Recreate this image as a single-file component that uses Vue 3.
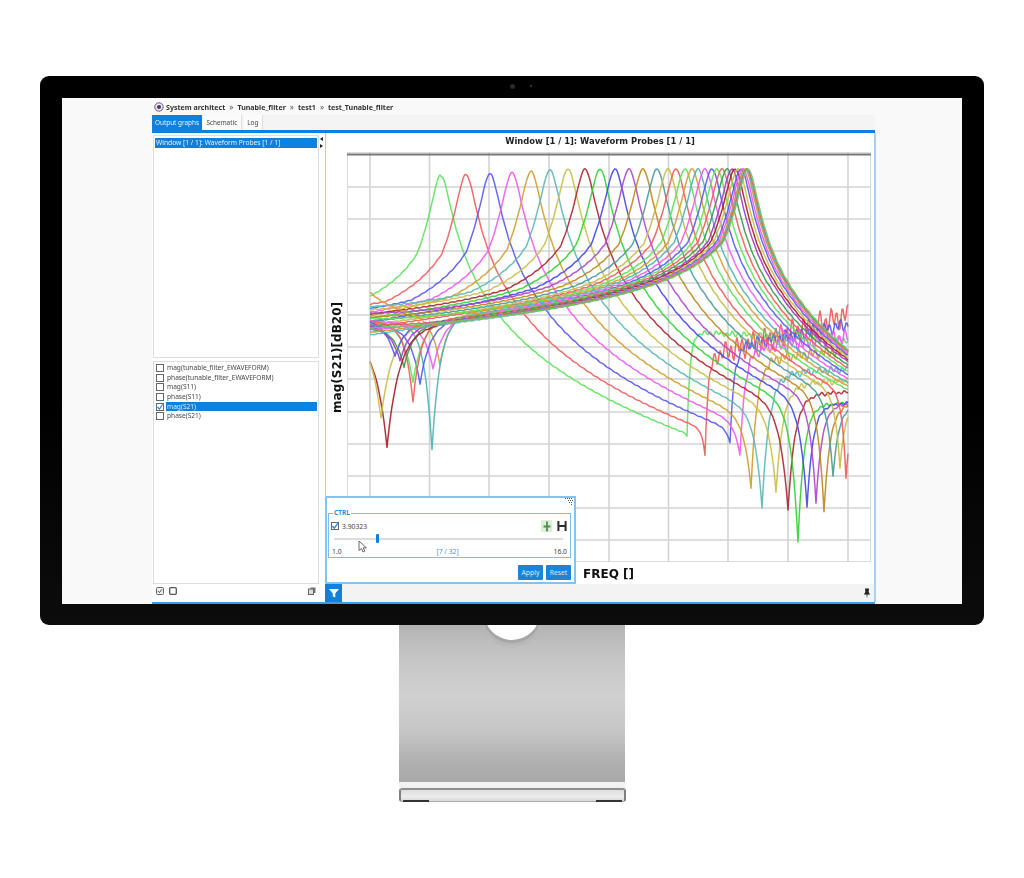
<script setup>
const crumbs = ['Tunable_filter', 'test1', 'test_Tunable_filter']
const tabs = ['Schematic', 'Log']
const probes = [
  { name: 'mag(tunable_filter_EWAVEFORM)' },
  { name: 'phase(tunable_filter_EWAVEFORM)' },
  { name: 'mag(S11)' },
  { name: 'phase(S11)' },
  { name: 'mag(S21)', on: true },
  { name: 'phase(S21)' }
]

const vGrid = [370, 429.5, 489, 549, 609, 668.5, 728, 788, 848]
const hGrid = [187, 219, 251, 283, 315, 347, 379, 412, 444, 476, 508, 540]

const peaks = [441, 466, 490, 512, 531, 550, 568, 585, 600, 615, 629, 643, 657, 668, 676, 685, 692, 698, 705, 712, 717, 722, 727, 732, 735, 738, 741, 743, 745, 746, 747, 748]
const colors = ['#5fe35f', '#ef5f5f', '#5a5cf0', '#ef5cef', '#d1a032', '#5fb9b9', '#c9c04a', '#ab2a36', '#35d335', '#4a4ae6', '#b048c8', '#bd8a20', '#4f9a9a', '#c6bd45', '#ee5c5c', '#60e060', '#d1a032', '#4fb4b4', '#ef5cef', '#5a5cf0', '#5fe35f', '#ef5f5f', '#3c9a4c', '#a040c0', '#a91f2d', '#c9c04a', '#5a5cf0', '#ef5cef', '#c99a30', '#5fb9b9', '#e05a5a', '#66cc66']
const rightNotch = { 0: [687, 436, 1.5, 3], 1: [705, 455, 3, 3], 2: [730, 443, 4, 4], 3: [740, 455, 6, 5], 4: [751, 488, 7, 6], 5: [762, 508, 7, 7], 6: [776, 492, 7, 7], 7: [788, 510, 8, 7], 8: [798, 542, 7, 6], 9: [807, 507, 7, 6], 10: [816, 503, 6, 6], 11: [824, 512, 6, 6], 12: [833, 476, 6, 6], 13: [840, 468, 5, 5], 14: [846, 478, 4, 5] }
const level = [332, 358, 348, 350, 360, 375, 385, 395, 405, 405, 405, 405, 405, 405, 405]
const levelSlope = [0.05, -0.3, -0.2, -0.12, -0.1, -0.07, -0.06, -0.05, -0.04, -0.04, -0.04, -0.04, -0.04, -0.04, -0.04]
const rippleAmp = [3, 13, 7, 8, 6, 4, 3, 2, 1.5, 1.5, 1.5, 1.5, 1.5, 1.5, 1.5]
const leftNotch = { 16: [440, 368, 9, 30], 17: [432, 450, 8, 0], 18: [433, 370, 10, 8], 19: [420, 385, 10, 6], 20: [413, 382, 10, 0], 21: [413, 403, 8, 4], 22: [404, 367, 10, 0], 23: [400, 363, 10, 6], 24: [387, 447, 12, 0], 25: [381, 418, 12, 0], 26: [395, 360, 10, 8] }

function baseY(i, x) {
  const p = peaks[i]
  const top = 176 - Math.min(7, i * 1.2)
  const d = x - p
  const L = Math.log10(1 + (d / 8) * (d / 8))
  if (d >= 0) return top + 80 * L + 0.1 * Math.max(0, d - 50)
  const t = (p - 441) / 307
  const early = L <= 1 ? 80 * L : L <= 2 ? 80 + 50 * (L - 1) : 130 + 20 * (L - 2)
  const late = L <= 1 ? 72 * L : 72 + 38 * (L - 1)
  return top + (1 - t) * early + t * late + ((i % 5) - 2) * 2.5 * Math.exp(-(x - 370) / 60)
}

function curveY(i, x) {
  let y = baseY(i, x)
  const rn = rightNotch[i]
  if (rn) {
    const [n, ny, wl, wr] = rn
    if (x <= n) {
      y += (ny - baseY(i, n)) * Math.exp(-(n - x) / wl)
    } else {
      const lv = level[i] + (x - n) * levelSlope[i]
      const rise = 1 - Math.exp(-(x - n) / 10)
      const wave = 0.65 * Math.sin(x * 1.13 + i * 1.7) + 0.35 * Math.sin(x * 0.47 + i * 3.1)
      y = lv + (ny - level[i]) * Math.exp(-(x - n) / wr) + rippleAmp[i] * rise * wave
    }
  }
  const ln = leftNotch[i]
  if (ln) {
    const [n, ny, w, lift] = ln
    y += (ny - baseY(i, n)) * Math.exp(-Math.abs(x - n) / w)
    y -= lift * Math.exp(-(x - 370) / 30)
  }
  y += 0.35 * Math.sin(x * 0.9 + i)
  return y
}

const curves = peaks.map((_, i) => {
  const pts = []
  for (let x = 370; x <= 848; x += 1) pts.push(`${x},${curveY(i, x).toFixed(1)}`)
  return { color: colors[i], points: pts.join(' ') }
})
</script>

<template>
  <div class="page">
    <div class="monitor">
      <span class="cam"></span>
      <span class="cam small"></span>
      <div class="screen">
        <div class="app">
          <div class="crumbs">
            <svg class="logo" width="10" height="10" viewBox="0 0 10 10">
              <circle cx="5" cy="5" r="4.2" fill="#eee" stroke="#66557f" stroke-width="1" />
              <circle cx="5" cy="5" r="2.1" fill="#53307e" />
            </svg>
            <b>System architect</b>
            <template v-for="c in crumbs" :key="c">
              <i>»</i><b>{{ c }}</b>
            </template>
          </div>
          <div class="tabs">
            <span class="tab active">Output graphs</span>
            <span v-for="t in tabs" :key="t" class="tab">{{ t }}</span>
          </div>
          <div class="body">
            <div class="side">
              <div class="box windows">
                <div class="window-row">Window [1 / 1]: Waveform Probes [1 / 1]</div>
              </div>
              <div class="box probes">
                <div v-for="p in probes" :key="p.name" class="probe">
                  <span class="check" :class="{ on: p.on }">
                    <svg v-if="p.on" width="8" height="8" viewBox="0 0 8 8"><path d="M1.5 4 L3.4 6 L6.6 1.5" fill="none" stroke="#2585dc" stroke-width="1.2" /></svg>
                  </span>
                  <span class="probe-name" :class="{ sel: p.on }">{{ p.name }}</span>
                </div>
              </div>
              <div class="side-tools">
                <svg width="8" height="8" viewBox="0 0 8 8"><rect x=".5" y=".5" width="7" height="7" rx="1" fill="#eee" stroke="#666" /><path d="M2 4 L3.4 5.6 L6 2.2" fill="none" stroke="#555" /></svg>
                <svg width="8" height="8" viewBox="0 0 8 8"><rect x=".7" y=".7" width="6.6" height="6.6" rx="1" fill="none" stroke="#555" stroke-width="1.3" /></svg>
                <svg class="push" width="8" height="8" viewBox="0 0 8 8"><rect x="2.5" y=".5" width="5" height="5.5" fill="#777" /><rect x=".5" y="2" width="5" height="5.5" fill="#ddd" stroke="#666" /></svg>
              </div>
            </div>
            <div class="splitter">
              <svg width="4" height="12" viewBox="0 0 4 12"><path d="M0 2 L3 0 V4 Z M3 9 L0 7 V11 Z" fill="#222" /></svg>
            </div>
            <div class="main">
              <div class="plot-title">Window [1 / 1]: Waveform Probes [1 / 1]</div>
              <div class="plot-row">
                <div class="y-label"><span>mag(S21)[dB20]</span></div>
                <svg class="plot" width="524" height="410" viewBox="347 152 524 410">
                  <rect x="347" y="152" width="524" height="410" fill="#fff" stroke="#dcdcdc" stroke-width="2" />
                  <line v-for="x in vGrid" :key="x" :x1="x" :x2="x" y1="152" y2="562" stroke="#d3d3d3" stroke-width="1.6" />
                  <line v-for="y in hGrid" :key="y" :y1="y" :y2="y" x1="347" x2="871" stroke="#d3d3d3" stroke-width="1.6" />
                  <line x1="347" x2="871" y1="154.5" y2="154.5" stroke="#777" stroke-width="2" />
                  <polyline v-for="c in curves" :key="c.points" :points="c.points" :stroke="c.color" fill="none" stroke-width="1.5" stroke-opacity=".92" stroke-linejoin="round" />
                </svg>
              </div>
              <div class="x-label">FREQ []</div>
              <div class="bottom-bar">
                <span class="filter-btn">
                  <svg width="10" height="10" viewBox="0 0 10 10"><path d="M0 1 H10 L6.3 5.2 V9.5 L3.7 8.2 V5.2 Z" fill="#fff" /></svg>
                </span>
                <svg class="pin" width="8" height="11" viewBox="0 0 8 11"><path d="M2 0.5 H6 L5.6 4 L7.2 6.5 H.8 L2.4 4 Z M3.5 6.5 H4.5 L4 10.5 Z" fill="#222" /></svg>
              </div>

              <div class="popup">
                <svg class="grip" width="8" height="7" viewBox="0 0 8 7"><path d="M0 0h1v1H0zM2 0h1v1H2zM4 0h1v1H4zM6 0h1v1H6zM3 2h1v1H3zM5 2h1v1H5zM7 2h1v1H7zM4 4h1v1H4zM6 4h1v1H6zM6 6h1v1H6z" fill="#555" /></svg>
                <fieldset class="ctrl">
                  <legend>CTRL</legend>
                  <div class="ctrl-top">
                    <span class="check on big">
                      <svg width="8" height="8" viewBox="0 0 8 8"><path d="M1.2 4 L3.3 6.2 L6.8 1.3" fill="none" stroke="#2585dc" stroke-width="1.3" /></svg>
                    </span>
                    <span class="value">3.90323</span>
                    <span class="marker-a">
                      <svg width="10" height="11" viewBox="0 0 10 11"><path d="M5 0.5 V10.5 M1.5 5.5 H8.5" stroke="#4f8f4f" stroke-width="1.8" /></svg>
                    </span>
                    <svg class="marker-h" width="10" height="10" viewBox="0 0 10 10"><path d="M1.4 0 V10 M8.6 0 V10 M1.4 5 H8.6" stroke="#2c2c2c" stroke-width="2" fill="none" /></svg>
                  </div>
                  <div class="slider"><span class="thumb"></span></div>
                  <div class="scale">
                    <span>1.0</span><span class="step">[7 / 32]</span><span>16.0</span>
                  </div>
                </fieldset>
                <div class="actions">
                  <button type="button">Apply</button>
                  <button type="button">Reset</button>
                </div>
                <svg class="cursor" width="10" height="13" viewBox="0 0 10 13"><path d="M1 1 V10.5 L3.4 8.5 L5 12 L6.8 11.2 L5.2 7.8 H8.4 Z" fill="#fff" stroke="#666" stroke-width="1" /></svg>
              </div>
            </div>
          </div>
        </div>
      </div>
    </div>
    <div class="stand"><span class="cut"></span></div>
    <div class="stand-lip"></div>
    <div class="base"><span class="foot"></span><span class="foot"></span></div>
  </div>
</template>

<style>
html, body { background: #fff; }
</style>

<style scoped>
.page {
  width: 1024px;
  height: 878px;
  padding-top: 76px;
  box-sizing: border-box;
  display: flex;
  flex-direction: column;
  align-items: center;
  background: #fff;
  overflow: hidden;
  font-family: "Noto Sans", "DejaVu Sans", sans-serif;
  color: #333;
}
.monitor {
  position: relative;
  width: 944px;
  height: 549px;
  box-sizing: border-box;
  padding: 22px 22px 21px;
  background: linear-gradient(#000 0, #000 60%, #0c0c0c 100%);
  border-radius: 9px;
  flex: none;
}
.cam {
  position: absolute;
  left: 470px;
  top: 8px;
  width: 5px;
  height: 5px;
  border-radius: 50%;
  background: #2a2a30;
}
.cam.small {
  left: 490px;
  top: 9px;
  width: 2px;
  height: 2px;
  background: #444;
}
.screen {
  height: 100%;
  background: #f9f9f9;
  padding: 0 87px 0 90px;
  box-sizing: border-box;
}
.app {
  height: 100%;
  display: flex;
  flex-direction: column;
  filter: blur(0.45px);
}
.crumbs {
  height: 17px;
  flex: none;
  display: flex;
  align-items: center;
  gap: 4px;
  padding-left: 2px;
  font-size: 7.1px;
  color: #333;
}
.crumbs b { font-weight: 700; }
.crumbs i { font-style: normal; font-size: 8px; color: #555; }
.logo { margin-right: -2px; }
.tabs {
  height: 15px;
  flex: none;
  display: flex;
  align-items: stretch;
  gap: 2px;
  background: #f4f4f4;
  border-bottom: 3px solid #0f80dc;
  box-sizing: content-box;
}
.tab {
  display: flex;
  align-items: center;
  padding: 0 3.5px;
  font-size: 6.4px;
  color: #444;
  background: #fbfbfb;
  border-right: 1px solid #ddd;
}
.tab.active {
  width: 50px;
  box-sizing: border-box;
  justify-content: center;
  background: #0f80dc;
  color: #e8f3fc;
  padding: 0;
  border: 0;
  margin-right: -1px;
}
.body {
  flex: 1;
  min-height: 0;
  display: flex;
  background: #fff;
  border-bottom: 2px solid #3f9be2;
  box-sizing: border-box;
}
.side {
  width: 167px;
  flex: none;
  padding: 2px 0 0 1px;
  box-sizing: border-box;
  display: flex;
  flex-direction: column;
}
.box {
  border: 1px solid #dedede;
  box-sizing: border-box;
  background: #fff;
}
.windows {
  height: 223px;
  margin-bottom: 3px;
  padding: 2px 1px;
}
.window-row {
  height: 10px;
  line-height: 10px;
  background: #0f80dc;
  color: #e6f2fc;
  font-size: 6.7px;
  padding-left: 1px;
  white-space: nowrap;
}
.probes {
  height: 223px;
  padding: 1px 1px;
}
.probe {
  height: 9.7px;
  display: flex;
  align-items: center;
  gap: 2px;
  font-size: 6.6px;
  color: #444;
  padding-left: 1px;
  white-space: nowrap;
}
.check {
  width: 8px;
  height: 8px;
  flex: none;
  border: 1px solid #666;
  background: #fff;
  box-sizing: border-box;
  display: inline-flex;
  align-items: center;
  justify-content: center;
}
.check svg { flex: none; margin: -1px; }
.probe-name {
  flex: 1;
  height: 9.7px;
  line-height: 9.7px;
  padding-left: 1px;
}
.probe-name.sel { background: #0f80dc; color: #d9ecfb; }
.side-tools {
  flex: 1;
  display: flex;
  align-items: center;
  gap: 5px;
  padding: 0 3px 4px 3px;
}
.side-tools .push { margin-left: auto; }
.splitter {
  width: 6px;
  flex: none;
  padding: 4px 0 0 1px;
  box-sizing: border-box;
}
.splitter svg { display: block; }
.main {
  position: relative;
  flex: 1;
  min-width: 0;
  display: flex;
  flex-direction: column;
  border-left: 1px solid #a9d2f2;
  border-right: 2px solid #a9d2f2;
  margin-right: -1px;
}
.plot-title {
  height: 19px;
  line-height: 17px;
  flex: none;
  text-align: center;
  font-size: 8.4px;
  font-weight: 700;
  font-family: "DejaVu Sans", sans-serif;
  color: #222;
  white-space: nowrap;
}
.plot-row {
  display: flex;
  flex: none;
  height: 410px;
}
.y-label {
  width: 21px;
  box-sizing: border-box;
  flex: none;
  display: flex;
  align-items: center;
  justify-content: center;
  padding-left: 1px;
}
.y-label span {
  writing-mode: vertical-rl;
  transform: rotate(180deg);
  font-size: 12px;
  font-weight: 700;
  color: #111;
  white-space: nowrap;
  font-family: "DejaVu Sans", sans-serif;
}
.plot { display: block; flex: none; }
.x-label {
  height: 22px;
  flex: none;
  line-height: 24px;
  padding-left: 17px;
  text-align: center;
  font-size: 12px;
  font-weight: 700;
  font-family: "DejaVu Sans", sans-serif;
  color: #111;
}
.bottom-bar {
  flex: 1;
  display: flex;
  align-items: stretch;
  justify-content: space-between;
  background: #f3f3f3;
  min-height: 0;
}
.filter-btn {
  width: 17px;
  margin-left: -1px;
  background: #0f80dc;
  display: flex;
  align-items: center;
  justify-content: center;
}
.pin { align-self: center; margin-right: 3px; }
.popup {
  position: absolute;
  left: -1px;
  bottom: 18px;
  width: 251px;
  height: 88px;
  box-sizing: border-box;
  background: #fff;
  border: 2px solid #84c2f0;
  padding: 12px 3px 0 1px;
}
.grip { position: absolute; right: 1px; top: 0; }
.ctrl {
  margin: 0;
  padding: 4px 2px 0 2px;
  height: 48px;
  box-sizing: border-box;
  border: 1.5px solid #7dbdf0;
  min-width: 0;
}
.ctrl legend {
  padding: 0 1px;
  margin-left: 2px;
  font-size: 6.5px;
  line-height: 6px;
  font-weight: 700;
  color: #2f8ad8;
}
.ctrl-top {
  display: flex;
  align-items: center;
  height: 12px;
  gap: 3px;
}
.check.big { border-color: #666; }
.value { font-size: 6.8px; color: #444; }
.marker-a {
  margin-left: auto;
  width: 11px;
  height: 12px;
  background: #dcefd9;
  display: flex;
  align-items: center;
  justify-content: center;
  border-radius: 1px;
}
.marker-h { margin: 0 1px 0 2px; }
.slider {
  position: relative;
  height: 2px;
  margin: 6px 5px 0 3px;
  background: #dcdcdc;
}
.thumb {
  position: absolute;
  left: 42px;
  top: -4px;
  width: 3px;
  height: 9px;
  background: #0f80dc;
  border-radius: 1px;
}
.scale {
  display: flex;
  justify-content: space-between;
  font-size: 6.8px;
  color: #444;
  margin-top: 7px;
  padding: 0 1px;
}
.step { color: #4a90d6; }
.actions {
  display: flex;
  justify-content: flex-end;
  gap: 3px;
  margin-top: 7px;
}
.actions button {
  width: 25px;
  height: 15px;
  padding: 0;
  border: 0;
  border-radius: 1px;
  background: #1785dc;
  color: #d7ebfb;
  font-family: inherit;
  font-size: 6.8px;
}
.cursor {
  position: absolute;
  left: 31px;
  top: 42px;
}
.stand {
  position: relative;
  width: 226px;
  height: 157px;
  flex: none;
  overflow: hidden;
  background: linear-gradient(#b4b4b4 0, #c6c6c7 22%, #d0d0d1 45%, #c6c6c7 68%, #adadad 90%, #a9a9a9 100%);
}
.cut {
  position: absolute;
  left: 85px;
  top: -41px;
  width: 56px;
  height: 56px;
  background: #fff;
  border-radius: 50%;
  box-shadow: 0 1px 0 2px #a6a6a6, 0 2px 3px 4px #b6b6b6;
}
.stand-lip {
  width: 226px;
  height: 6px;
  flex: none;
  background: linear-gradient(#f4f4f4, #f0f0f0);
}
.base {
  width: 227px;
  height: 14px;
  flex: none;
  box-sizing: border-box;
  display: flex;
  justify-content: space-between;
  align-items: flex-end;
  padding: 0 2px;
  border-radius: 3px 3px 3px 3px;
  border-top: 2px solid #8f8f8f;
  border-left: 2px solid #808080;
  border-right: 2px solid #808080;
  border-bottom: 1px solid #aaa;
  background: linear-gradient(#dedede, #ececec 60%, #d8d8d8);
}
.foot {
  width: 26px;
  height: 2px;
  background: #333;
  margin-bottom: -1px;
}
</style>
